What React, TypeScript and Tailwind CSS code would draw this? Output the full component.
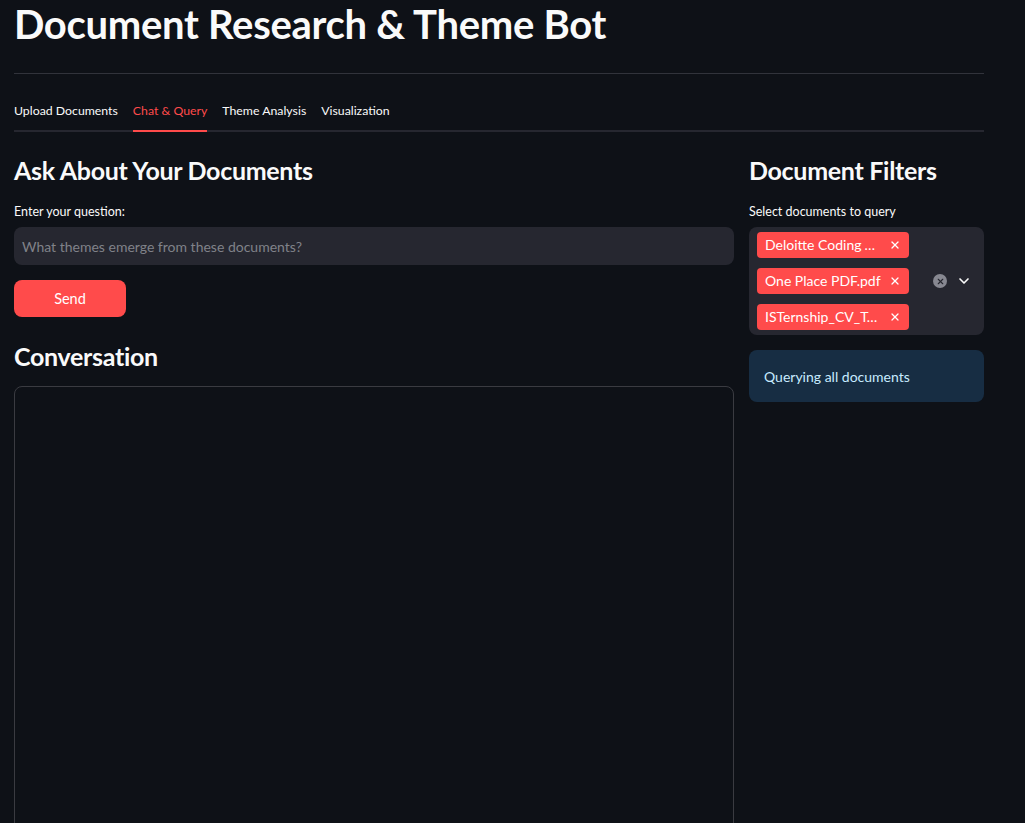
import React, { useState } from 'react';
import { ChevronDown, X } from 'lucide-react';

const tabs = ['Upload Documents', 'Chat & Query', 'Theme Analysis', 'Visualization'];

const docs = ['Deloitte Coding Assessment.pdf', 'One Place PDF.pdf', 'ISTernship_CV_Template.pdf'];

const Tag: React.FC<{ label: string }> = ({ label }) => (
  <div className="flex h-[26px] items-center rounded-[4px] bg-[#ff4b4b] pl-2 pr-2 text-[14px] text-white">
    <span className="max-w-[116px] truncate leading-none">{label}</span>
    <X size={12} strokeWidth={2.5} className="ml-[8px] shrink-0" />
  </div>
);

const App: React.FC = () => {
  const [activeTab, setActiveTab] = useState<string>('Chat & Query');
  const [question, setQuestion] = useState<string>('');

  return (
    <div className="min-h-[823px] overflow-hidden bg-[#0e1117] font-['Lato',sans-serif] text-[#fafafa]">
      <div className="w-[970px] pl-[14px] box-content">
        <h1 className="pt-[2px] text-[40px] font-bold leading-[44px] tracking-[-0.3px]">
          Document Research &amp; Theme Bot
        </h1>
        <hr className="mt-[27px] border-t border-[#31333b]" />

        {/* tabs */}
        <div className="mt-[29px] flex gap-[15px] border-b-2 border-[#262730]">
          {tabs.map((t) => (
            <button
              key={t}
              onClick={() => setActiveTab(t)}
              className={`relative pb-[11px] text-[12.3px] leading-[16px] ${
                activeTab === t ? 'text-[#ff4b4b]' : 'text-[#fafafa]'
              }`}
            >
              {t}
              {activeTab === t && (
                <span className="absolute -bottom-[2px] left-0 right-0 h-[2px] bg-[#ff4b4b]" />
              )}
            </button>
          ))}
        </div>

        <div className="mt-[23px] flex gap-[15px]">
          {/* left column */}
          <div className="w-[720px]">
            <h2 className="text-[25px] font-bold leading-[30px] tracking-[-0.3px]">Ask About Your Documents</h2>
            <label className="mt-[19px] block text-[12.5px] leading-[16px]">Enter your question:</label>
            <input
              value={question}
              onChange={(e) => setQuestion(e.target.value)}
              placeholder="What themes emerge from these documents?"
              className="mt-[7px] h-[38px] w-full rounded-[8px] bg-[#262730] px-[8px] text-[14px] text-[#fafafa] outline-none placeholder:text-[#808289]"
            />
            <button className="mt-[15px] h-[37px] w-[112px] rounded-[8px] bg-[#ff4b4b] text-[14.5px] text-white">
              Send
            </button>
            <h2 className="mt-[24px] text-[25px] font-bold leading-[30px] tracking-[-0.3px]">Conversation</h2>
            <div className="mt-[15px] h-[460px] rounded-[8px] border border-[#3a3b41]" />
          </div>

          {/* right column */}
          <div className="w-[235px]">
            <h2 className="text-[25px] font-bold leading-[30px] tracking-[-0.3px]">Document Filters</h2>
            <label className="mt-[19px] block text-[12.5px] leading-[16px]">Select documents to query</label>
            <div className="mt-[7px] flex items-center rounded-[8px] bg-[#262730] py-[5px] pl-[8px] pr-[12px]">
              <div className="flex flex-1 flex-col items-start gap-[10px]">
                {docs.map((d) => (
                  <Tag key={d} label={d} />
                ))}
              </div>
              <div className="flex items-center gap-[9px]">
                <span className="flex h-[14px] w-[14px] items-center justify-center rounded-full bg-[#878891]">
                  <X size={9} strokeWidth={3} className="text-[#262730]" />
                </span>
                <ChevronDown size={16} strokeWidth={2.5} className="text-[#fafafa]" />
              </div>
            </div>
            <div className="mt-[15px] flex h-[52px] items-center rounded-[8px] bg-[#172d43] px-[15px] text-[14px] text-[#c7ebff]">
              Querying all documents
            </div>
          </div>
        </div>
      </div>
    </div>
  );
};

export default App;
